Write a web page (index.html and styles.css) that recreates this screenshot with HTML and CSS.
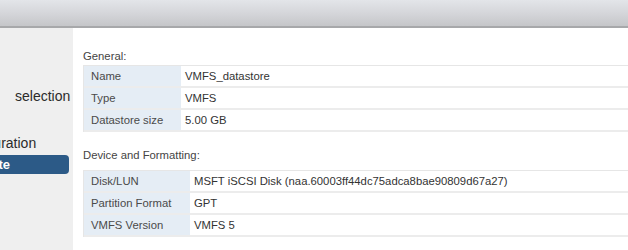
FILE: index.html
```html
<!DOCTYPE html>
<html>
<head>
<meta charset="utf-8">
<link rel="stylesheet" href="styles.css">
</head>
<body>
<div class="header"></div>
<div class="layout">
  <nav class="sidebar">
    <ul class="steps">
      <li class="step step--first"><span class="step-text">selection</span></li>
      <li class="step step--second"><span class="step-text step-text--config">configuration</span></li>
      <li class="step step--active"><span class="step-text step-text--complete">complete</span></li>
    </ul>
  </nav>
  <main class="main">
    <section class="section">
      <div class="section-title">General:</div>
      <div class="info info--general">
        <div class="cell label">Name</div><div class="cell value">VMFS_datastore</div>
        <div class="cell label">Type</div><div class="cell value">VMFS</div>
        <div class="cell label">Datastore size</div><div class="cell value">5.00 GB</div>
      </div>
    </section>
    <section class="section section--second">
      <div class="section-title">Device and Formatting:</div>
      <div class="info info--device">
        <div class="cell label">Disk/LUN</div><div class="cell value">MSFT iSCSI Disk (naa.60003ff44dc75adca8bae90809d67a27)</div>
        <div class="cell label">Partition Format</div><div class="cell value">GPT</div>
        <div class="cell label">VMFS Version</div><div class="cell value">VMFS 5</div>
      </div>
    </section>
  </main>
</div>
</body>
</html>
```
FILE: styles.css
```css
* { box-sizing: border-box; }
html, body { margin: 0; padding: 0; }
body {
  width: 628px;
  height: 250px;
  overflow: hidden;
  background: #ffffff;
  font-family: "Liberation Sans", Arial, sans-serif;
  font-size: 11.3px;
  color: #333333;
}
.header {
  height: 28px;
  background: linear-gradient(to bottom, #e3e5e9 0%, #d5d6da 50%, #c5c6c9 100%);
  border-bottom: 2px solid #a7a8aa;
}
.layout {
  display: flex;
  height: 222px;
}
.sidebar {
  width: 73px;
  flex: none;
  background: #efefef;
  overflow: hidden;
}
.steps {
  list-style: none;
  margin: 0;
  padding: 60px 0 0 0;
}
.step {
  height: 16px;
  line-height: 16px;
  font-size: 14px;
  color: #2b2b2b;
  white-space: nowrap;
  overflow: hidden;
}
.step--first { padding-left: 15px; }
.step--second { margin-top: 31px; }
.step--active {
  height: 19px;
  line-height: 19px;
  margin-top: 4px;
  margin-left: -10px;
  width: 79px;
  background: #2c5a87;
  color: #ffffff;
  font-size: 13px;
  font-weight: bold;
  border-radius: 4px;
}
.step-text { display: block; }
.step-text--config { margin-left: -44px; }
.step-text--complete { margin-left: -37px; }
.main {
  flex: 1;
  padding: 21px 0 0 10px;
  overflow: hidden;
}
.section-title {
  height: 14px;
  line-height: 14px;
  margin-bottom: 2px;
  color: #444444;
}
.section--second { margin-top: 16px; }
.section--second .section-title { margin-bottom: 8px; }
.info {
  display: grid;
  border-top: 1px solid #e6e6e6;
  border-left: 1px solid #e6e6e6;
}
.info--general { grid-template-columns: 97px 1fr; }
.info--device { grid-template-columns: 106px 1fr; }
.cell {
  height: 22px;
  line-height: 20px;
  border-bottom: 2px solid #ececec;
  white-space: nowrap;
}
.label {
  background: #e5edf5;
  padding-left: 7px;
  color: #4a4a4a;
}
.value {
  padding-left: 4px;
  color: #333333;
}
```
